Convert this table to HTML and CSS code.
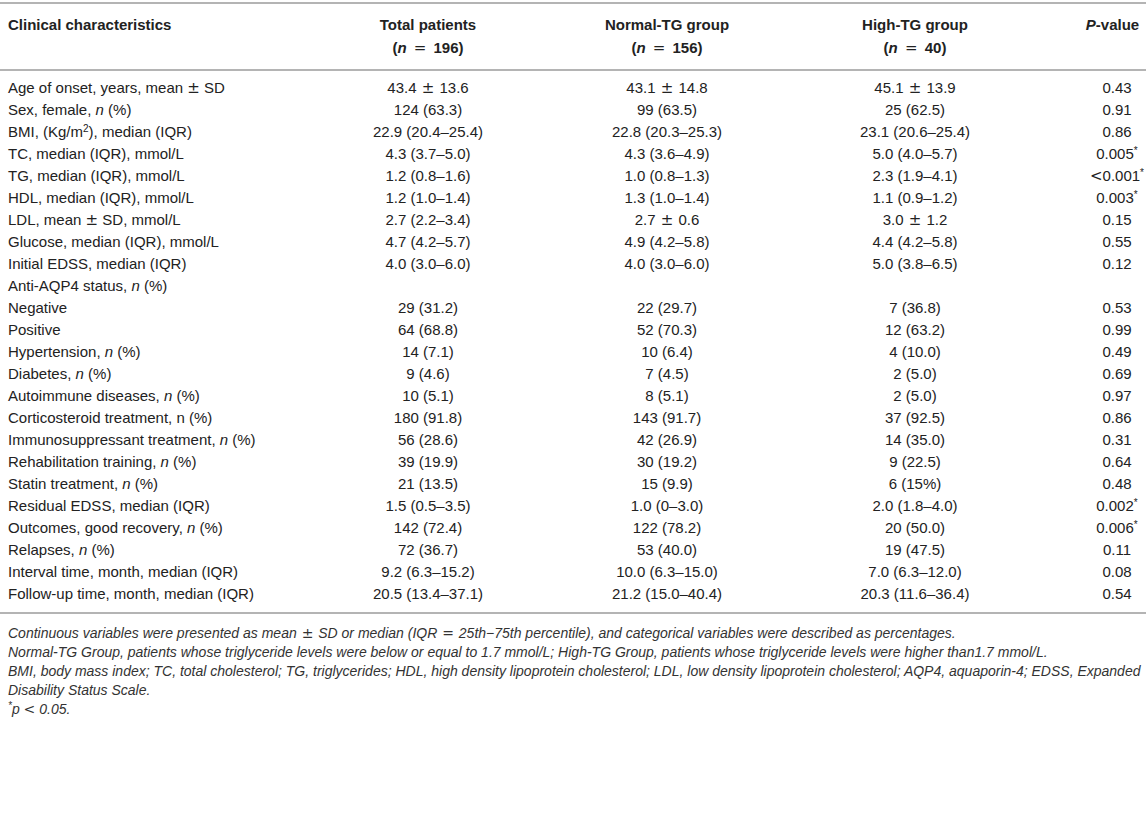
FILE: index.html
```html
<!DOCTYPE html>
<html lang="en">
<head>
<meta charset="utf-8">
<title>Clinical characteristics</title>
<link rel="stylesheet" href="styles.css">
</head>
<body>
<div class="page">
<table class="data">
  <colgroup>
    <col class="c0"><col class="c1"><col class="c2"><col class="c3"><col class="c4">
  </colgroup>
  <thead>
    <tr>
      <th class="lbl">Clinical characteristics</th>
      <th>Total patients<br>(<i>n</i> <span class="op">=</span> 196)</th>
      <th>Normal-TG group<br>(<i>n</i> <span class="op">=</span> 156)</th>
      <th>High-TG group<br>(<i>n</i> <span class="op">=</span> 40)</th>
      <th class="pv"><i>P</i>-value</th>
    </tr>
  </thead>
  <tbody>
    <tr class="first"><td class="lbl">Age of onset, years, mean <span class="pm">±</span> SD</td><td>43.4 <span class="pm">±</span> 13.6</td><td>43.1 <span class="pm">±</span> 14.8</td><td>45.1 <span class="pm">±</span> 13.9</td><td class="pv">0.43</td></tr>
    <tr><td class="lbl">Sex, female, <i>n</i> (%)</td><td>124 (63.3)</td><td>99 (63.5)</td><td>25 (62.5)</td><td class="pv">0.91</td></tr>
    <tr><td class="lbl">BMI, (Kg/m<sup>2</sup>), median (IQR)</td><td>22.9 (20.4–25.4)</td><td>22.8 (20.3–25.3)</td><td>23.1 (20.6–25.4)</td><td class="pv">0.86</td></tr>
    <tr><td class="lbl">TC, median (IQR), mmol/L</td><td>4.3 (3.7–5.0)</td><td>4.3 (3.6–4.9)</td><td>5.0 (4.0–5.7)</td><td class="pv">0.005<sup>*</sup></td></tr>
    <tr><td class="lbl">TG, median (IQR), mmol/L</td><td>1.2 (0.8–1.6)</td><td>1.0 (0.8–1.3)</td><td>2.3 (1.9–4.1)</td><td class="pv"><span class="lt">&lt;</span>0.001<sup>*</sup></td></tr>
    <tr><td class="lbl">HDL, median (IQR), mmol/L</td><td>1.2 (1.0–1.4)</td><td>1.3 (1.0–1.4)</td><td>1.1 (0.9–1.2)</td><td class="pv">0.003<sup>*</sup></td></tr>
    <tr><td class="lbl">LDL, mean <span class="pm">±</span> SD, mmol/L</td><td>2.7 (2.2–3.4)</td><td>2.7 <span class="pm">±</span> 0.6</td><td>3.0 <span class="pm">±</span> 1.2</td><td class="pv">0.15</td></tr>
    <tr><td class="lbl">Glucose, median (IQR), mmol/L</td><td>4.7 (4.2–5.7)</td><td>4.9 (4.2–5.8)</td><td>4.4 (4.2–5.8)</td><td class="pv">0.55</td></tr>
    <tr><td class="lbl">Initial EDSS, median (IQR)</td><td>4.0 (3.0–6.0)</td><td>4.0 (3.0–6.0)</td><td>5.0 (3.8–6.5)</td><td class="pv">0.12</td></tr>
    <tr><td class="lbl">Anti-AQP4 status, <i>n</i> (%)</td><td></td><td></td><td></td><td class="pv"></td></tr>
    <tr><td class="lbl">Negative</td><td>29 (31.2)</td><td>22 (29.7)</td><td>7 (36.8)</td><td class="pv">0.53</td></tr>
    <tr><td class="lbl">Positive</td><td>64 (68.8)</td><td>52 (70.3)</td><td>12 (63.2)</td><td class="pv">0.99</td></tr>
    <tr><td class="lbl">Hypertension, <i>n</i> (%)</td><td>14 (7.1)</td><td>10 (6.4)</td><td>4 (10.0)</td><td class="pv">0.49</td></tr>
    <tr><td class="lbl">Diabetes, <i>n</i> (%)</td><td>9 (4.6)</td><td>7 (4.5)</td><td>2 (5.0)</td><td class="pv">0.69</td></tr>
    <tr><td class="lbl">Autoimmune diseases, <i>n</i> (%)</td><td>10 (5.1)</td><td>8 (5.1)</td><td>2 (5.0)</td><td class="pv">0.97</td></tr>
    <tr><td class="lbl">Corticosteroid treatment, n (%)</td><td>180 (91.8)</td><td>143 (91.7)</td><td>37 (92.5)</td><td class="pv">0.86</td></tr>
    <tr><td class="lbl">Immunosuppressant treatment, <i>n</i> (%)</td><td>56 (28.6)</td><td>42 (26.9)</td><td>14 (35.0)</td><td class="pv">0.31</td></tr>
    <tr><td class="lbl">Rehabilitation training, <i>n</i> (%)</td><td>39 (19.9)</td><td>30 (19.2)</td><td>9 (22.5)</td><td class="pv">0.64</td></tr>
    <tr><td class="lbl">Statin treatment, <i>n</i> (%)</td><td>21 (13.5)</td><td>15 (9.9)</td><td>6 (15%)</td><td class="pv">0.48</td></tr>
    <tr><td class="lbl">Residual EDSS, median (IQR)</td><td>1.5 (0.5–3.5)</td><td>1.0 (0–3.0)</td><td>2.0 (1.8–4.0)</td><td class="pv">0.002<sup>*</sup></td></tr>
    <tr><td class="lbl">Outcomes, good recovery, <i>n</i> (%)</td><td>142 (72.4)</td><td>122 (78.2)</td><td>20 (50.0)</td><td class="pv">0.006<sup>*</sup></td></tr>
    <tr><td class="lbl">Relapses, <i>n</i> (%)</td><td>72 (36.7)</td><td>53 (40.0)</td><td>19 (47.5)</td><td class="pv">0.11</td></tr>
    <tr><td class="lbl">Interval time, month, median (IQR)</td><td>9.2 (6.3–15.2)</td><td>10.0 (6.3–15.0)</td><td>7.0 (6.3–12.0)</td><td class="pv">0.08</td></tr>
    <tr class="last"><td class="lbl">Follow-up time, month, median (IQR)</td><td>20.5 (13.4–37.1)</td><td>21.2 (15.0–40.4)</td><td>20.3 (11.6–36.4)</td><td class="pv">0.54</td></tr>
  </tbody>
</table>
<div class="notes">
  <p>Continuous variables were presented as mean <span class="pm">±</span> SD or median (IQR <span class="pm">=</span> 25th−75th percentile), and categorical variables were described as percentages.</p>
  <p>Normal-TG Group, patients whose triglyceride levels were below or equal to 1.7 mmol/L; High-TG Group, patients whose triglyceride levels were higher than1.7 mmol/L.</p>
  <p>BMI, body mass index; TC, total cholesterol; TG, triglycerides; HDL, high density lipoprotein cholesterol; LDL, low density lipoprotein cholesterol; AQP4, aquaporin-4; EDSS, Expanded Disability Status Scale.</p>
  <p><sup>*</sup>p <span class="lt">&lt;</span> 0.05.</p>
</div>
</div>
</body>
</html>
```

FILE: styles.css
```css
html, body {
  margin: 0;
  padding: 0;
  background: #ffffff;
}
.page {
  padding-top: 2px;
  font-family: "Liberation Sans", Arial, Helvetica, sans-serif;
  color: #222222;
  width: 1146px;
}
.data {
  width: 1146px;
  border-collapse: collapse;
  table-layout: fixed;
  font-size: 15px;
}
.c0 { width: 313px; }
.c1 { width: 230px; }
.c2 { width: 248px; }
.c3 { width: 248px; }
.c4 { width: 107px; }

.data thead tr {
  border-top: 2px solid #b4b4b4;
  border-bottom: 2px solid #b4b4b4;
}
.data th {
  font-weight: bold;
  line-height: 23px;
  padding: 9px 0 9px 0;
  text-align: center;
  vertical-align: top;
}
.data td {
  line-height: 22px;
  padding: 0;
  text-align: center;
  white-space: nowrap;
}
.data .lbl {
  text-align: left;
  padding-left: 8px;
}
.data .pv {
  padding-left: 49px;
}
.data th.pv {
  padding-left: 40px;
}
.data tbody tr.first td { padding-top: 6px; }
.data tbody tr.last td { padding-bottom: 7px; }
.data tbody tr.last { border-bottom: 2px solid #b4b4b4; }

.op {
  font-family: "DejaVu Sans", sans-serif;
  font-weight: normal;
  margin: 0 3px;
}
.pm {
  font-family: "DejaVu Sans", sans-serif;
  font-style: normal;
  margin: 0 1px;
}
.data .lbl .pm {
  margin: 0;
}
.lt {
  font-family: "DejaVu Sans", sans-serif;
  font-style: normal;
}

sup {
  font-size: 10px;
  line-height: 0;
  vertical-align: 5px;
}

.notes {
  margin-top: 10px;
  padding-left: 8px;
  font-size: 14px;
  font-style: italic;
  line-height: 19px;
  color: #333333;
}
.notes p {
  margin: 0;
}
```
